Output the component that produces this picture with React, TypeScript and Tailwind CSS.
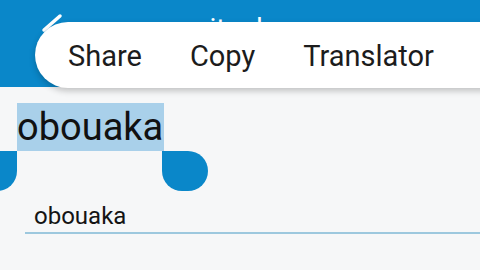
import React from "react";

export default function App() {
  return (
    <div
      className="relative w-[480px] h-[270px] overflow-hidden bg-[#f6f7f8]"
      style={{ fontFamily: "Roboto, 'Noto Sans', sans-serif" }}
    >
      {/* header */}
      <div className="h-[87px] bg-[#0a87c9] flex items-start">
        <svg width="40" height="40" viewBox="0 0 40 40" className="ml-[36px] mt-[8px]">
          <path d="M24 8 L8 22" stroke="#ffffff" strokeWidth="3.5" strokeLinecap="round" fill="none" />
        </svg>
        <div className="ml-[124px] mt-[13px] h-[9px] overflow-hidden">
          <div className="text-white text-[28px] leading-[32px]">ritual</div>
        </div>
      </div>

      {/* context popup */}
      <div className="absolute left-[35px] top-[22px] right-[-40px] h-[66px] bg-white rounded-l-[33px] shadow-[0_3px_6px_rgba(0,0,0,0.22)] flex items-center pl-[33px] pt-[4px] gap-[48px] text-[29px] text-[#1c1c1c]">
        <span>Share</span>
        <span>Copy</span>
        <span>Translator</span>
      </div>

      {/* body */}
      <div className="relative">
        <div className="pt-[16px] pl-[17px] flex">
          <span className="bg-[#a9d0ea] text-[38px] leading-[48px] h-[48px] text-[#111] pr-[1px]">obouaka</span>
        </div>
        <div className="relative h-[40px]">
          <div className="absolute left-[-29px] top-0 w-[46px] h-[40px] bg-[#0a87c9] rounded-tr-none rounded-tl-[23px] rounded-bl-[23px] rounded-br-[23px]" />
          <div className="absolute left-[162px] top-0 w-[46px] h-[40px] bg-[#0a87c9] rounded-tl-none rounded-tr-[23px] rounded-bl-[23px] rounded-br-[23px]" />
        </div>
        <div className="ml-[25px] mt-[11px] border-b-2 border-[#9dc8de] pl-[9px] pb-[1px]">
          <span className="text-[24px] leading-[28px] text-[#141414]">obouaka</span>
        </div>
      </div>
    </div>
  );
}
